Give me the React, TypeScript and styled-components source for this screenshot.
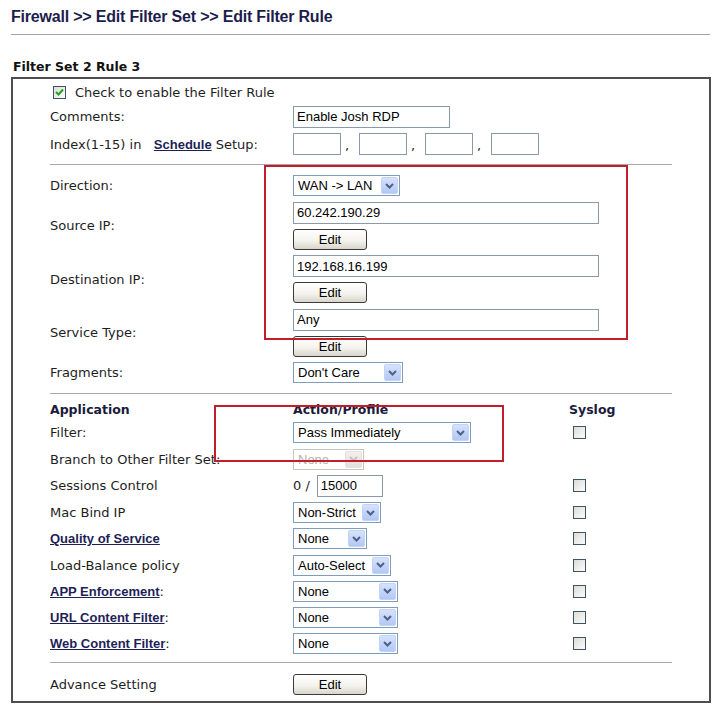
import React, { FC } from "react"
import styled, { createGlobalStyle } from "styled-components"

const labelFont = `"DejaVu Sans", Verdana, sans-serif`
const ctlFont = `"Liberation Sans", Arial, sans-serif`

const GlobalStyle = createGlobalStyle`
  body {
    margin: 0;
    background: #fff;
  }
`

const Page = styled.div`
  box-sizing: border-box;
  width: 716px;
  padding: 8px 6px 0 11px;
`

const Title = styled.h1`
  margin: 0;
  width: 699px;
  padding-bottom: 8px;
  border-bottom: 1px solid #a4a4a4;
  font: bold 16px/18px ${ctlFont};
  letter-spacing: -0.2px;
  color: #1d1d4d;
`

const SetHeading = styled.h2`
  margin: 25px 0 3px 2px;
  font: bold 12.5px/14px ${labelFont};
  color: #111;
`

const Panel = styled.div`
  position: relative;
  box-sizing: border-box;
  width: 700px;
  border: 2px solid #4e4e4e;
  padding: 6px 37px 6px 37px;
`

const Column = styled.div<{ $gap: number }>`
  display: flex;
  flex-direction: column;
  gap: ${p => p.$gap}px;
`

const Row = styled.div`
  display: grid;
  grid-template-columns: 243px 276px 1fr;
  align-items: center;
`

const Label = styled.span`
  font: 13px/15px ${labelFont};
  color: #1e1e1e;
  white-space: nowrap;
`

const Header = styled.span`
  font: bold 12.5px/15px ${labelFont};
  color: #1b1b3b;
`

const Link = styled.a`
  font: bold 13px/15px ${ctlFont};
  color: #1f1f58;
  text-decoration: underline;
`

const Divider = styled.div<{ $top: number; $bottom: number }>`
  height: 1px;
  background: #a8a8a8;
  margin: ${p => p.$top}px 0 ${p => p.$bottom}px;
`

const CheckLine = styled.label`
  display: flex;
  align-items: center;
  gap: 9px;
  padding-left: 3px;
`

const Box = styled.span`
  box-sizing: border-box;
  display: inline-flex;
  align-items: center;
  justify-content: center;
  width: 13px;
  height: 13px;
  border: 1px solid #3f5266;
  background: linear-gradient(135deg, #dcdcd7, #fbfbf9);
`

const SyslogCell = styled.div`
  padding-left: 4px;
  display: flex;
  align-items: center;
`

const TextInput = styled.input<{ $w: number }>`
  box-sizing: border-box;
  width: ${p => p.$w}px;
  height: 22px;
  margin: 0;
  padding: 0 3px;
  border: 1px solid #8a9aab;
  font: 13px ${ctlFont};
  color: #000;
  outline: none;
  background: #fff;
`

const EditButton = styled.button`
  box-sizing: border-box;
  width: 74px;
  height: 21px;
  margin: 0;
  padding: 0;
  border: 1px solid #3a3a3a;
  border-radius: 3px;
  background: linear-gradient(#ffffff, #f4f3ee 55%, #d9d5ca);
  font: 13px ${ctlFont};
  color: #000;
`

const Stack = styled.div`
  display: flex;
  flex-direction: column;
  align-items: flex-start;
  gap: 5px;
`

const SelectBox = styled.div<{ $w: number; $disabled?: boolean }>`
  box-sizing: border-box;
  width: ${p => p.$w}px;
  height: 21px;
  padding: 1px;
  display: flex;
  align-items: center;
  border: 1px solid ${p => (p.$disabled ? "#c9c7ba" : "#7f9db9")};
  background: #fff;
  font: 13px ${ctlFont};
  color: ${p => (p.$disabled ? "#b2b2ae" : "#000")};
`

const SelectText = styled.span`
  flex: 1;
  padding-left: 3px;
  white-space: nowrap;
  overflow: hidden;
`

const ArrowButton = styled.span<{ $disabled?: boolean }>`
  box-sizing: border-box;
  width: 17px;
  height: 17px;
  display: flex;
  align-items: center;
  justify-content: center;
  border: 1px solid ${p => (p.$disabled ? "#e6e1df" : "#c3d3f8")};
  border-radius: 2px;
  background: ${p =>
    p.$disabled
      ? "linear-gradient(#f3efee, #e4dfdd)"
      : "linear-gradient(#d6e2fd, #b3c7f5)"};
`

const Inline = styled.div<{ $gap: number }>`
  display: flex;
  align-items: center;
  gap: ${p => p.$gap}px;
`

const Comma = styled.span`
  width: 18px;
  box-sizing: border-box;
  padding-left: 4px;
  font: 13px/15px ${labelFont};
  color: #1e1e1e;
  align-self: flex-end;
  padding-bottom: 2px;
`

const RedFrame = styled.div<{ $x: number; $y: number; $w: number; $h: number }>`
  position: absolute;
  box-sizing: border-box;
  left: ${p => p.$x}px;
  top: ${p => p.$y}px;
  width: ${p => p.$w}px;
  height: ${p => p.$h}px;
  border: 2px solid #c21e29;
  pointer-events: none;
`

const Select: FC<{ value: string; width: number; disabled?: boolean }> = ({ value, width, disabled }) => (
  <SelectBox $w={width} $disabled={disabled}>
    <SelectText>{value}</SelectText>
    <ArrowButton $disabled={disabled}>
      <svg width="9" height="6" viewBox="0 0 9 6">
        <polyline
          points="1,1 4.5,4.5 8,1"
          fill="none"
          stroke={disabled ? "#cdbfbf" : "#4d6185"}
          strokeWidth="2"
        />
      </svg>
    </ArrowButton>
  </SelectBox>
)

const Checkbox: FC<{ checked?: boolean }> = ({ checked }) => (
  <Box>
    {checked && (
      <svg width="9" height="9" viewBox="0 0 9 9">
        <polyline points="1,4 3.5,6.5 8,1.5" fill="none" stroke="#21a121" strokeWidth="2" />
      </svg>
    )}
  </Box>
)

const appRows: { label: React.ReactNode; control: React.ReactNode; syslog: boolean }[] = [
  { label: <Label>Filter:</Label>, control: <Select value="Pass Immediately" width={178} />, syslog: true },
  { label: <Label>Branch to Other Filter Set:</Label>, control: <Select value="None" width={71} disabled />, syslog: false },
  {
    label: <Label>Sessions Control</Label>,
    control: (
      <Inline $gap={7}>
        <Label>0 /</Label>
        <TextInput $w={66} readOnly value="15000" />
      </Inline>
    ),
    syslog: true,
  },
  { label: <Label>Mac Bind IP</Label>, control: <Select value="Non-Strict" width={88} />, syslog: true },
  { label: <Link href="#">Quality of Service</Link>, control: <Select value="None" width={74} />, syslog: true },
  { label: <Label>Load-Balance policy</Label>, control: <Select value="Auto-Select" width={98} />, syslog: true },
  { label: <Label><Link href="#">APP Enforcement</Link>:</Label>, control: <Select value="None" width={105} />, syslog: true },
  { label: <Label><Link href="#">URL Content Filter</Link>:</Label>, control: <Select value="None" width={105} />, syslog: true },
  { label: <Label><Link href="#">Web Content Filter</Link>:</Label>, control: <Select value="None" width={105} />, syslog: true },
]

const ipRows = [
  { label: "Source IP:", value: "60.242.190.29" },
  { label: "Destination IP:", value: "192.168.16.199" },
  { label: "Service Type:", value: "Any" },
]

const App: FC = () => (
  <Page>
    <GlobalStyle />
    <Title>Firewall &gt;&gt; Edit Filter Set &gt;&gt; Edit Filter Rule</Title>
    <SetHeading>Filter Set 2 Rule 3</SetHeading>
    <Panel>
      <Column $gap={5.5}>
        <CheckLine>
          <Checkbox checked />
          <Label>Check to enable the Filter Rule</Label>
        </CheckLine>
        <Row>
          <Label>Comments:</Label>
          <TextInput $w={157} readOnly value="Enable Josh RDP" />
        </Row>
        <Row>
          <Label>
            Index(1-15) in&nbsp;&nbsp; <Link href="#">Schedule</Link> Setup:
          </Label>
          <Inline $gap={0}>
            <TextInput $w={48} readOnly value="" />
            <Comma>,</Comma>
            <TextInput $w={48} readOnly value="" />
            <Comma>,</Comma>
            <TextInput $w={48} readOnly value="" />
            <Comma>,</Comma>
            <TextInput $w={48} readOnly value="" />
          </Inline>
        </Row>
      </Column>
      <Divider $top={9} $bottom={10} />
      <Column $gap={5.5}>
        <Row>
          <Label>Direction:</Label>
          <Select value="WAN -> LAN" width={107} />
        </Row>
        {ipRows.map(r => (
          <Row key={r.label}>
            <Label>{r.label}</Label>
            <Stack>
              <TextInput $w={306} readOnly value={r.value} />
              <EditButton>Edit</EditButton>
            </Stack>
          </Row>
        ))}
        <Row>
          <Label>Fragments:</Label>
          <Select value="Don't Care" width={110} />
        </Row>
      </Column>
      <Divider $top={10} $bottom={8} />
      <Column $gap={5.25}>
        <Row>
          <Header>Application</Header>
          <Header>Action/Profile</Header>
          <Header>Syslog</Header>
        </Row>
        {appRows.map((r, i) => (
          <Row key={i}>
            {r.label}
            <div>{r.control}</div>
            <SyslogCell>{r.syslog && <Checkbox />}</SyslogCell>
          </Row>
        ))}
      </Column>
      <Divider $top={8} $bottom={11} />
      <Row>
        <Label>Advance Setting</Label>
        <div>
          <EditButton>Edit</EditButton>
        </div>
      </Row>
      <RedFrame $x={251} $y={86} $w={364} $h={175} />
      <RedFrame $x={201} $y={326} $w={290} $h={57} />
    </Panel>
  </Page>
)

export default App
